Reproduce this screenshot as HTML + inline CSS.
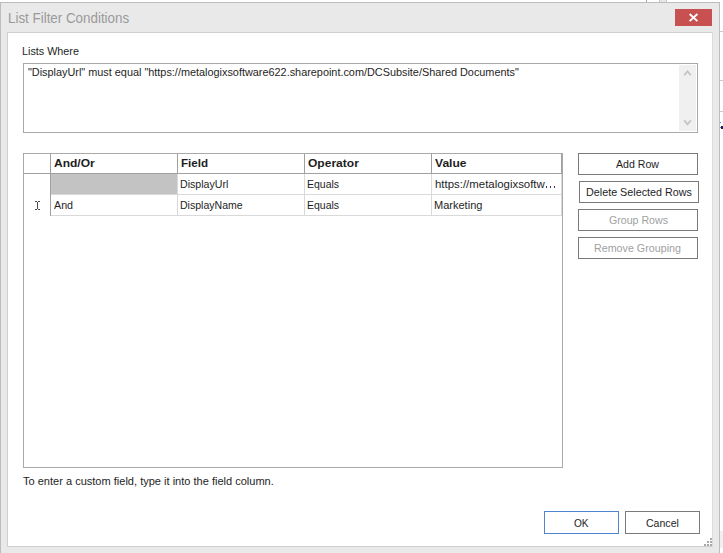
<!DOCTYPE html>
<html><head><meta charset="utf-8">
<style>
*{box-sizing:border-box;margin:0;padding:0}
html,body{width:723px;height:553px;overflow:hidden;background:#ffffff;font-family:"Liberation Sans",sans-serif;font-size:11px;color:#1e1e1e}
.a{position:absolute}
.t{position:absolute;white-space:pre;line-height:14px;transform-origin:0 0}
#dlg{left:0;top:2px;width:720px;height:560px;background:#e9e9e9;border-left:1px solid #bdbdbd;border-top:1px solid #bdbdbd;border-right:1px solid #bdbdbd}
#panel{left:7px;top:32px;width:706px;height:515px;background:#fff;border:1px solid #cfcfcf;border-right-color:#dcdcdc}
.btn{position:absolute;border:1px solid #7a7a7a;background:#fff}
.gl{position:absolute;background:#d9d9d9}
.gd{position:absolute;background:#a0a0a0}
</style></head><body>
<!-- background window bits -->
<div class="a" style="left:646px;top:0;width:1px;height:2px;background:#a8a8a8"></div>
<div class="a" style="left:659px;top:0;width:8px;height:2px;background:#e6e6e6;border-left:1px solid #c8c8c8;border-right:1px solid #c8c8c8"></div>
<div class="a" style="left:720px;top:31px;width:3px;height:1px;background:#cacaca"></div>
<div class="a" style="left:720px;top:80px;width:3px;height:1px;background:#cacaca"></div>
<div class="a" style="left:720px;top:111px;width:3px;height:1px;background:#cacaca"></div>
<div class="a" style="left:720px;top:122px;width:1px;height:1px;background:#3d8ee0"></div>
<div class="a" style="left:720px;top:127px;width:1px;height:1px;background:#3d8ee0"></div>
<div class="a" style="left:721px;top:126px;width:2px;height:3px;background:#2a1a40"></div>
<div class="a" style="left:720px;top:531px;width:3px;height:17px;background:#f0f0f0"></div>

<div id="dlg" class="a"></div>
<div class="a" style="left:675px;top:9px;width:37px;height:17px;background:#c75050"></div>
<svg class="a" style="left:675px;top:9px" width="37" height="17"><path d="M14.6 5 L22.4 12.2 M22.4 5 L14.6 12.2" stroke="#fff" stroke-width="1.8"/></svg>

<div id="panel" class="a"></div>

<!-- textarea -->
<div class="a" style="left:23px;top:63px;width:675px;height:70px;border:1px solid #a9a9a9;background:#fff"></div>
<div class="a" style="left:679px;top:65px;width:17px;height:66px;background:#f0f0f0"></div>
<svg class="a" style="left:679px;top:65px" width="17" height="66">
<path d="M5.2 10.3 L8.5 6.3 L11.8 10.3" fill="none" stroke="#c2c2c2" stroke-width="1.8"/>
<path d="M5.2 55.3 L8.5 59.3 L11.8 55.3" fill="none" stroke="#c2c2c2" stroke-width="1.8"/>
</svg>

<!-- grid -->
<div class="a" style="left:23px;top:153px;width:540px;height:315px;border:1px solid #a9a9a9;background:#fff"></div>
<div class="gd" style="left:24px;top:173px;width:538px;height:1px"></div>
<div class="gd" style="left:50px;top:154px;width:1px;height:19px"></div>
<div class="gd" style="left:177px;top:154px;width:1px;height:19px"></div>
<div class="gd" style="left:304px;top:154px;width:1px;height:19px"></div>
<div class="gd" style="left:431px;top:154px;width:1px;height:19px"></div>
<div class="gd" style="left:561px;top:154px;width:1px;height:19px"></div>
<div class="gd" style="left:50px;top:174px;width:1px;height:42px"></div>
<div class="gl" style="left:177px;top:174px;width:1px;height:42px"></div>
<div class="gl" style="left:304px;top:174px;width:1px;height:42px"></div>
<div class="gl" style="left:431px;top:174px;width:1px;height:42px"></div>
<div class="gl" style="left:561px;top:174px;width:1px;height:42px"></div>
<div class="gl" style="left:51px;top:194px;width:511px;height:1px"></div>
<div class="gl" style="left:51px;top:215px;width:511px;height:1px"></div>
<div class="a" style="left:51px;top:174px;width:126px;height:20px;background:#c3c3c3"></div>

<!-- I-beam -->
<svg class="a" style="left:33px;top:199px" width="9" height="13"><path d="M2 2.5 H4 M5 2.5 H7 M4.5 3 V10 M2 10.5 H4 M5 10.5 H7" fill="none" stroke="#4a4a4a" stroke-width="1"/></svg>

<!-- buttons -->
<div class="btn" style="left:578px;top:153px;width:120px;height:22px"></div>
<div class="btn" style="left:579px;top:181px;width:120px;height:22px"></div>
<div class="btn" style="left:578px;top:209px;width:120px;height:22px"></div>
<div class="btn" style="left:578px;top:237px;width:120px;height:22px"></div>
<div class="btn" style="left:544px;top:511px;width:75px;height:23px;border-color:#4f84d1"></div>
<div class="btn" style="left:625px;top:511px;width:75px;height:23px"></div>

<!-- grip -->
<svg class="a" style="left:704px;top:538px" width="8" height="8" fill="#a8a8a8">
<rect x="6" y="0" width="2" height="2"/><rect x="3" y="3" width="2" height="2"/><rect x="6" y="3" width="2" height="2"/>
<rect x="0" y="6" width="2" height="2"/><rect x="3" y="6" width="2" height="2"/><rect x="6" y="6" width="2" height="2"/>
</svg>
<div class="t" style="left:8.24px;top:11px;transform:scaleX(0.955);font-size:14px;color:#9a9a9a;">List Filter Conditions</div>
<div class="t" style="left:21.82px;top:44px;transform:scaleX(0.981);">Lists Where</div>
<div class="t" style="left:28.00px;top:65px;transform:scaleX(0.988);">"DisplayUrl" must equal "https://metalogixsoftware622.sharepoint.com/DCSubsite/Shared Documents"</div>
<div class="t" style="left:54.30px;top:156px;transform:scaleX(1.092);font-weight:bold;">And/Or</div>
<div class="t" style="left:181.20px;top:156px;transform:scaleX(1.056);font-weight:bold;">Field</div>
<div class="t" style="left:308.20px;top:156px;transform:scaleX(1.094);font-weight:bold;">Operator</div>
<div class="t" style="left:435.20px;top:156px;transform:scaleX(1.097);font-weight:bold;">Value</div>
<div class="t" style="left:179.84px;top:177px;transform:scaleX(0.965);">DisplayUrl</div>
<div class="t" style="left:307.05px;top:177px;transform:scaleX(0.952);">Equals</div>
<div class="t" style="left:435.00px;top:177px;transform:scaleX(1.038);">https://metalogixsoftw</div>
<div class="a" style="left:546px;top:186px;width:1px;height:2px;background:#3a3060"></div>
<div class="a" style="left:550px;top:186px;width:1px;height:2px;background:#3a3060"></div>
<div class="a" style="left:554px;top:186px;width:1px;height:2px;background:#3a3060"></div>
<div class="t" style="left:54.30px;top:198px;transform:scaleX(0.974);">And</div>
<div class="t" style="left:179.84px;top:198px;transform:scaleX(0.958);">DisplayName</div>
<div class="t" style="left:307.05px;top:198px;transform:scaleX(0.952);">Equals</div>
<div class="t" style="left:434.00px;top:198px;transform:scaleX(1.002);">Marketing</div>
<div class="t" style="left:23.10px;top:474px;transform:scaleX(1.003);">To enter a custom field, type it into the field column.</div>
<div class="t" style="left:615.70px;top:157px;transform:scaleX(0.962);">Add Row</div>
<div class="t" style="left:585.62px;top:185px;transform:scaleX(0.979);">Delete Selected Rows</div>
<div class="t" style="left:608.50px;top:213px;transform:scaleX(0.964);color:#a0a0a0;">Group Rows</div>
<div class="t" style="left:593.63px;top:241px;transform:scaleX(0.974);color:#a0a0a0;">Remove Grouping</div>
<div class="t" style="left:573.90px;top:516px;transform:scaleX(0.919);">OK</div>
<div class="t" style="left:645.60px;top:516px;transform:scaleX(0.959);">Cancel</div>
</body></html>
